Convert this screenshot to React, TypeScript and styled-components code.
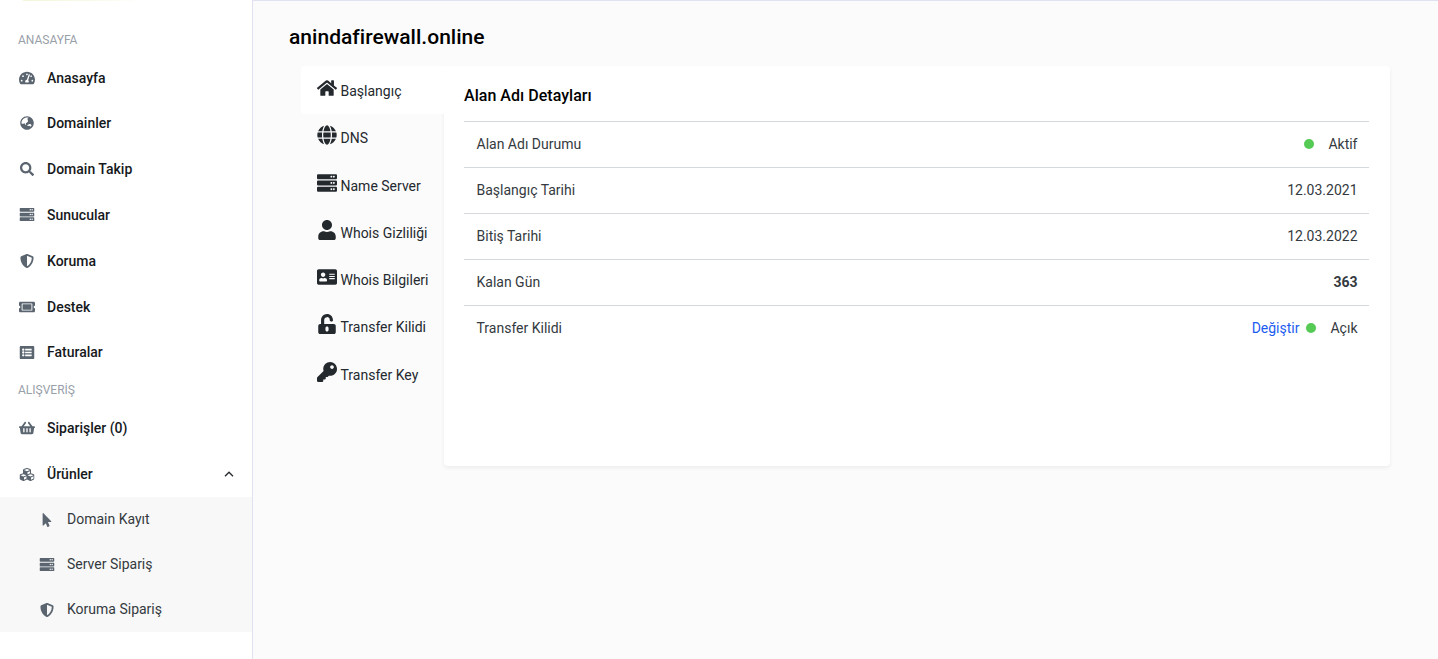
import React from "react";
import styled, { createGlobalStyle } from "styled-components";
import { FaTachometerAlt, FaGlobeAsia, FaSearch, FaServer, FaShieldAlt, FaTicketAlt, FaListAlt, FaShoppingBasket, FaCubes, FaMousePointer, FaHome, FaGlobe, FaUser, FaAddressCard, FaUnlockAlt, FaKey } from "react-icons/fa";

const Global = createGlobalStyle`
  *, *::before, *::after { box-sizing: border-box; }
  body { margin: 0; background: #fbfbfb; font-family: Roboto, sans-serif; font-size: 14px; color: #343a40; overflow: hidden; }
`;

const Page = styled.div`
  display: flex;
  height: 659px;
`;

const Sidebar = styled.aside`
  width: 253px;
  flex: none;
  background: #fff;
  border-right: 1px solid #e0e1f1;
`;

const BrandStrip = styled.div`
  height: 1px;
  width: 110px;
  margin-left: 23px;
  background: linear-gradient(90deg, #f3f6dc, #f8fae8 60%, #fefefa);
`;

const Heading = styled.div<{ $first?: boolean }>`
  height: ${(p) => (p.$first ? 53.65 : 30.15)}px;
  padding: ${(p) => (p.$first ? 29 : 4.5)}px 18px 0;
  font-size: 12px;
  line-height: 20px;
  color: #98a0a9;
`;

const NavItem = styled.a`
  display: flex;
  align-items: center;
  height: 45.8px;
  padding: 0 17px 0 18px;
  font-weight: 500;
  line-height: 20px;
  color: #16191c;
`;

const NavIcon = styled.span<{ $size?: number }>`
  display: flex;
  justify-content: center;
  width: 18px;
  margin-right: 11px;
  color: #5b6570;
  font-size: ${(p) => p.$size ?? 14}px;

  svg {
    transform: translateX(${(p) => ((p.$size ?? 14) % 2 ? -0.5 : 0)}px);
  }
`;

const Chevron = styled.svg`
  margin-left: auto;
`;

const SubMenu = styled.div`
  background: #f8f8f8;
`;

const SubItem = styled.a`
  display: flex;
  align-items: center;
  height: 45px;
  padding: 1px 0 0 38px;
  line-height: 20px;
`;

const SubLabel = styled.span`
  padding-bottom: 2px;
`;

const Main = styled.main`
  flex: 1;
  border-top: 1px solid #e0e1f1;
  padding: 21px 48px 0 36px;
`;

const Title = styled.h1`
  margin: 0;
  font-size: 21px;
  line-height: 30px;
  font-weight: 500;
  letter-spacing: 0.02px;
  color: #000;
`;

const Panel = styled.div`
  display: flex;
  align-items: flex-start;
  margin: 14px 0 0 12px;
`;

const Tabs = styled.nav`
  position: relative;
  z-index: 1;
  width: 143px;
  flex: none;
`;

const Tab = styled.a<{ $active?: boolean }>`
  display: flex;
  align-items: flex-start;
  height: ${(p) => (p.$active ? 48 : 47.28)}px;
  margin-bottom: ${(p) => (p.$active ? -0.72 : 0)}px;
  padding: 12px 0 0 16px;
  border-radius: 4px 0 0 4px;
  background: ${(p) => (p.$active ? "#fff" : "transparent")};
  color: #24292e;
  white-space: nowrap;
`;

const TabIcon = styled.span`
  display: flex;
  font-size: 20px;
  margin-right: 3.5px;
`;

const TabText = styled.span`
  line-height: 20px;
  padding-top: 3px;
`;

const Card = styled.section`
  flex: 1;
  height: 400px;
  padding: 20px 21px 0 20px;
  background: #fff;
  border-radius: 0 4px 4px 4px;
  box-shadow: 0 2px 4px rgba(0, 0, 0, 0.06);
`;

const CardTitle = styled.h2`
  margin: 0 0 15px;
  font-size: 16px;
  line-height: 20px;
  font-weight: 500;
  letter-spacing: 0.03px;
  color: #000;
`;

const Row = styled.div`
  display: flex;
  align-items: center;
  justify-content: space-between;
  height: 46px;
  padding: 0 11.5px 1px 12.5px;
  border-top: 1px solid #d5d9dd;
  line-height: 20px;
`;

const Value = styled.div<{ $bold?: boolean }>`
  display: flex;
  align-items: center;
  font-weight: ${(p) => (p.$bold ? 700 : 400)};
`;

const Dot = styled.i`
  width: 10px;
  height: 10px;
  margin: 0 14px 0 7px;
  border-radius: 50%;
  background: #55ca55;
`;

const Link = styled.a`
  color: #1b5cf0;
`;

const menu = [
  { label: "Anasayfa", icon: <FaTachometerAlt />, size: 16 },
  { label: "Domainler", icon: <FaGlobeAsia /> },
  { label: "Domain Takip", icon: <FaSearch /> },
  { label: "Sunucular", icon: <FaServer />, size: 15 },
  { label: "Koruma", icon: <FaShieldAlt /> },
  { label: "Destek", icon: <FaTicketAlt />, size: 16 },
  { label: "Faturalar", icon: <FaListAlt />, size: 15 },
];

const products = [
  { label: "Domain Kayıt", icon: <FaMousePointer /> },
  { label: "Server Sipariş", icon: <FaServer />, size: 15 },
  { label: "Koruma Sipariş", icon: <FaShieldAlt /> },
];

const tabs = [
  { label: "Başlangıç", icon: <FaHome /> },
  { label: "DNS", icon: <FaGlobe /> },
  { label: "Name Server", icon: <FaServer /> },
  { label: "Whois Gizliliği", icon: <FaUser /> },
  { label: "Whois Bilgileri", icon: <FaAddressCard /> },
  { label: "Transfer Kilidi", icon: <FaUnlockAlt /> },
  { label: "Transfer Key", icon: <FaKey /> },
];

export default function App() {
  return (
    <Page>
      <Global />
      <Sidebar>
        <BrandStrip />
        <Heading $first>ANASAYFA</Heading>
        {menu.map((m) => (
          <NavItem key={m.label}>
            <NavIcon $size={m.size}>{m.icon}</NavIcon>
            {m.label}
          </NavItem>
        ))}
        <Heading>ALIŞVERİŞ</Heading>
        <NavItem>
          <NavIcon $size={16}><FaShoppingBasket /></NavIcon>
          Siparişler (0)
        </NavItem>
        <NavItem>
          <NavIcon $size={15}><FaCubes /></NavIcon>
          Ürünler
          <Chevron width="12" height="8" viewBox="0 0 12 8" fill="none" stroke="#24292e" strokeWidth="1.3">
            <path d="M2 6.2 6 2.2l4 4" />
          </Chevron>
        </NavItem>
        <SubMenu>
          {products.map((m) => (
            <SubItem key={m.label}>
              <NavIcon $size={m.size}>{m.icon}</NavIcon>
              <SubLabel>{m.label}</SubLabel>
            </SubItem>
          ))}
        </SubMenu>
      </Sidebar>
      <Main>
        <Title>anindafirewall.online</Title>
        <Panel>
          <Tabs>
            {tabs.map((t, i) => (
              <Tab key={t.label} $active={i === 0}>
                <TabIcon>{t.icon}</TabIcon>
                <TabText>{t.label}</TabText>
              </Tab>
            ))}
          </Tabs>
          <Card>
            <CardTitle>Alan Adı Detayları</CardTitle>
            <Row><span>Alan Adı Durumu</span><Value><Dot />Aktif</Value></Row>
            <Row><span>Başlangıç Tarihi</span><Value>12.03.2021</Value></Row>
            <Row><span>Bitiş Tarihi</span><Value>12.03.2022</Value></Row>
            <Row><span>Kalan Gün</span><Value $bold>363</Value></Row>
            <Row><span>Transfer Kilidi</span><Value><Link>Değiştir</Link><Dot />Açık</Value></Row>
          </Card>
        </Panel>
      </Main>
    </Page>
  );
}
